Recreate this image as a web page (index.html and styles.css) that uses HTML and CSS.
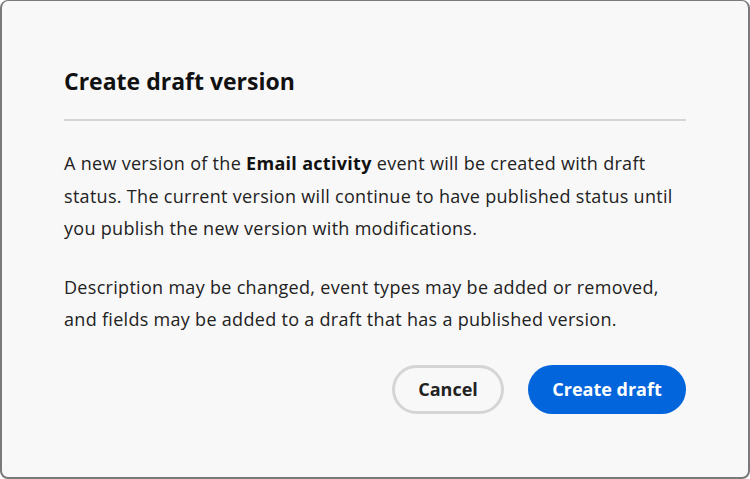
FILE: index.html
```html
<!DOCTYPE html>
<html>
<head>
<meta charset="utf-8">
<link rel="stylesheet" href="styles.css">
</head>
<body>
<div class="dialog">
  <h1 class="title">Create draft version</h1>
  <div class="divider"></div>
  <p class="text">A new version of the <strong>Email activity</strong> event will be created with draft status. The current version will continue to have published status until you publish the new version with modifications.</p>
  <p class="text">Description may be changed, event types may be added or removed, and fields may be added to a draft that has a published version.</p>
  <div class="actions">
    <button class="btn btn-secondary">Cancel</button>
    <button class="btn btn-primary">Create draft</button>
  </div>
</div>
</body>
</html>
```
FILE: styles.css
```css
html, body {
  margin: 0;
  padding: 0;
  width: 750px;
  height: 479px;
  background: #ffffff;
}
body {
  font-family: "Open Sans", "Noto Sans", sans-serif;
  color: #222222;
}
.dialog {
  box-sizing: border-box;
  width: 750px;
  height: 479px;
  background: #f8f8f8;
  border: 2px solid #7a7a7a;
  border-top-width: 1px;
  border-radius: 8px;
  padding: 0 62px 0 62px;
  display: flex;
  flex-direction: column;
}
.title {
  margin: 62px 0 0 0;
  font-size: 23px;
  line-height: 36px;
  font-weight: 700;
  color: #111111;
}
.divider {
  height: 2px;
  background: #d5d5d5;
  margin-top: 20px;
  margin-bottom: 26px;
}
.text {
  margin: 0 0 26px 0;
  font-size: 18px;
  line-height: 32.5px;
  letter-spacing: 0.3px;
  color: #222222;
}
.text strong {
  font-weight: 700;
  color: #111111;
}
.actions {
  display: flex;
  justify-content: flex-end;
  gap: 24px;
  margin-top: 3px;
}
.btn {
  box-sizing: border-box;
  height: 49px;
  border-radius: 25px;
  font-family: "Open Sans", "Noto Sans", sans-serif;
  font-size: 18px;
  font-weight: 700;
  cursor: pointer;
}
.btn-secondary {
  width: 112px;
  background: #f8f8f8;
  border: 3px solid #d5d5d5;
  color: #222222;
}
.btn-primary {
  width: 158px;
  background: #0265dc;
  border: none;
  color: #ffffff;
}
```
